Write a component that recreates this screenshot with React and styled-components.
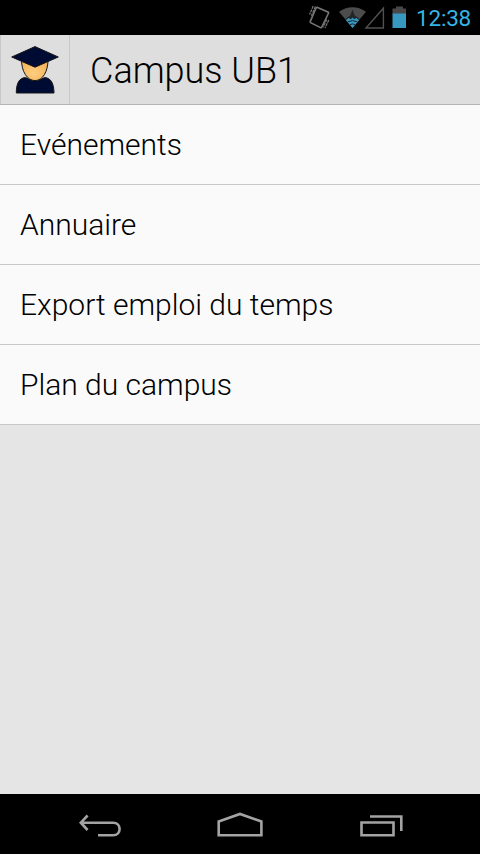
import React from "react";
import styled, { createGlobalStyle } from "styled-components";

const GlobalStyle = createGlobalStyle`
  body { margin: 0; background: #000; }
`;

const Screen = styled.div`
  width: 480px;
  height: 854px;
  display: flex;
  flex-direction: column;
  overflow: hidden;
  background: #e5e5e5;
  color: #000;
  font-family: Roboto, sans-serif;
  font-weight: 285;
`;

const StatusBar = styled.div`
  height: 35px;
  flex: none;
  display: flex;
  justify-content: flex-end;
  align-items: center;
  box-sizing: border-box;
  padding-right: 9px;
  background: #000;
`;

const StatusIcons = styled.svg`
  display: block;
  width: 108px;
  height: 35px;
`;

const Clock = styled.time`
  width: 55px;
  font-size: 22.5px;
  font-weight: 400;
  letter-spacing: -0.2px;
  line-height: 35px;
  color: #33b5e5;
  white-space: nowrap;
  padding-top: 1px;
`;

const Header = styled.header`
  height: 70px;
  flex: none;
  box-sizing: border-box;
  display: flex;
  align-items: stretch;
  background: #dedede;
  border-bottom: 1px solid #b4b4b4;
`;

const LogoButton = styled.button`
  width: 70px;
  box-sizing: border-box;
  padding: 0;
  border: 0;
  border-left: 1px solid #c8c8c8;
  border-right: 1px solid #c8c8c8;
  background: transparent;
`;

const Logo = styled.svg`
  display: block;
  width: 68px;
  height: 69px;
`;

const Title = styled.h1`
  margin: 0 0 0 20px;
  font-size: 36px;
  font-weight: 285;
  line-height: 72px;
  white-space: nowrap;
`;

const List = styled.ul`
  list-style: none;
  margin: 0;
  padding: 0;
  flex: none;
`;

const Row = styled.li`
  height: 80px;
  box-sizing: border-box;
  padding-left: 20px;
  border-bottom: 1px solid #c8c8c8;
  background: #fafafa;
  font-size: 30px;
  line-height: 79px;
  white-space: nowrap;
`;

const Content = styled.main`
  flex: 1;
`;

const NavBar = styled.nav`
  height: 60px;
  flex: none;
  display: flex;
  justify-content: center;
  background: #000;
`;

const NavButton = styled.button`
  width: 140px;
  height: 60px;
  padding: 0;
  border: 0;
  background: transparent;
`;

const NavIcon = styled.svg`
  display: block;
  width: 140px;
  height: 60px;
  fill: none;
  stroke: #a3a3a3;
  stroke-width: 2.6;
`;

const items = ["Evénements", "Annuaire", "Export emploi du temps", "Plan du campus"];

const StatusGlyphs = () => (
  <StatusIcons viewBox="308 0 108 35">
    <g fill="none" stroke="#777">
      <path strokeWidth="1.6" d="M317 7.2 L328.4 12.2 Q328.8 12.6 328.6 13 L321.8 27.2 Q321.4 28 320.6 27.6 L310.5 22.6 Q310 22.2 310.2 21.6 L316.2 7.8 Q316.5 7.2 317 7.2 Z" />
      <path strokeWidth="1.2" strokeDasharray="3 .7" d="M313.2 6 L309.6 14.5 M315.4 6.6 L311.4 15.8 M328.8 20 L325 28 M326.8 19.6 L323 27.2" />
    </g>
    <path d="M339 11.7 Q352.5 2.8 366 11.7 L352.5 28 Z" fill="#4c4c4c" />
    <path d="M352.5 9.5 L354.6 15.3 L359.5 18.8 L352.5 28 L345.5 18.8 L350.4 15.3 Z" fill="#20262a" />
    <path d="M346 20.2 L348.4 18.1 L351 19.3 L352.5 17.4 L354 19.3 L356.6 18.1 L359 20.2 L352.5 28 Z" fill="#3899c0" />
    <path d="M347.8 21.8 Q352.5 19.5 357.2 21.8 M350 24.6 Q352.5 23.2 355 24.6" fill="none" stroke="#14242d" strokeWidth="1" />
    <path d="M366 28 L383.4 8.2 V28 Z" fill="none" stroke="#505050" strokeWidth="1.4" />
    <path d="M396 6.5 H403 V8.5 H406 V14 H392.5 V8.5 H396 Z" fill="#484848" />
    <path d="M392.5 13.5 H406 V28 H392.5 Z" fill="#3899c0" />
  </StatusIcons>
);

const Graduate = () => (
  <Logo viewBox="1 35 68 69" stroke="#171717" strokeWidth="1" strokeLinejoin="round">
    <defs>
      <radialGradient id="skin" cx="45%" cy="62%" r="60%">
        <stop offset="0" stopColor="#ffce80" />
        <stop offset="1" stopColor="#f2b45b" />
      </radialGradient>
    </defs>
    <path d="M16.3 93 C16.2 84 19 77.6 25.6 77.6 Q35 83.5 44.5 77.6 C51 77.6 54 84 54 93 Z" fill="#000b34" />
    <path d="M21.5 60 C21.5 71 27 80.6 35 80.6 C43 80.6 48 71 48 60 Z" fill="url(#skin)" />
    <path d="M11.7 57 L35 46.6 L58.3 57 L35 67.2 Z" fill="#000b34" />
  </Logo>
);

export default function App() {
  return (
    <>
      <GlobalStyle />
      <Screen>
        <StatusBar>
          <StatusGlyphs />
          <Clock>12:38</Clock>
        </StatusBar>
        <Header>
          <LogoButton aria-label="Campus">
            <Graduate />
          </LogoButton>
          <Title>Campus UB1</Title>
        </Header>
        <List>
          {items.map((item) => (
            <Row key={item}>{item}</Row>
          ))}
        </List>
        <Content />
        <NavBar>
          <NavButton aria-label="Retour">
            <NavIcon viewBox="30 794 140 60">
              <path d="M87.6 815.5 L80.8 822.7 L87.6 830 M81.5 822.7 H113 C121.8 822.7 121.8 835.3 113 835.3 H98" />
            </NavIcon>
          </NavButton>
          <NavButton aria-label="Accueil">
            <NavIcon viewBox="170 794 140 60">
              <path d="M218.7 821.5 L240 814 L261.4 821.5 V835.3 H218.7 Z" />
            </NavIcon>
          </NavButton>
          <NavButton aria-label="Applications récentes">
            <NavIcon viewBox="310 794 140 60">
              <path d="M361.5 822.5 H393.5 V835.3 H361.5 Z M370 816.5 H401.3 V831" />
            </NavIcon>
          </NavButton>
        </NavBar>
      </Screen>
    </>
  );
}
